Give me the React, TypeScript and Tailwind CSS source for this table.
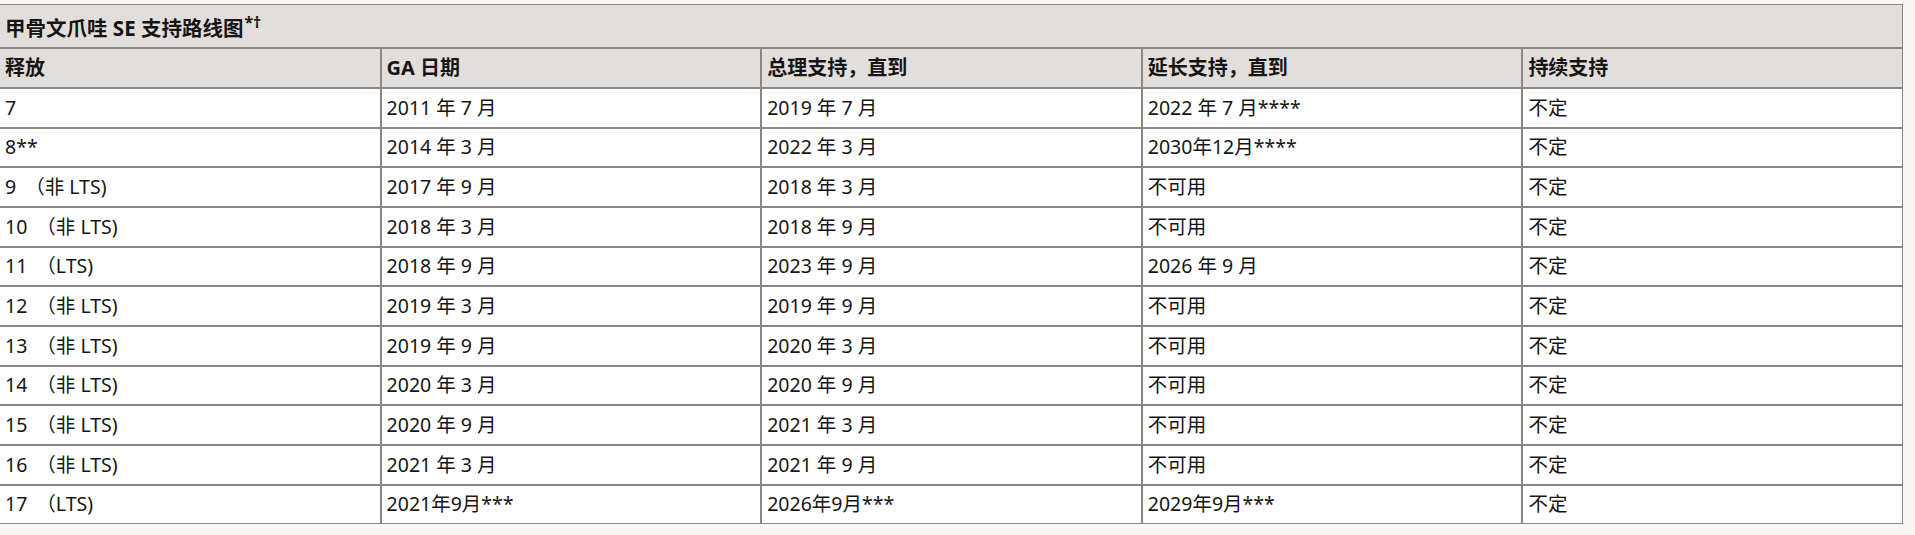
const rows: [string, string, string, string, string, string][] = [
  ['7', '', '2011 年 7 月', '2019 年 7 月', '2022 年 7 月****', '不定'],
  ['8**', '', '2014 年 3 月', '2022 年 3 月', '2030年12月****', '不定'],
  ['9', '非 LTS', '2017 年 9 月', '2018 年 3 月', '不可用', '不定'],
  ['10', '非 LTS', '2018 年 3 月', '2018 年 9 月', '不可用', '不定'],
  ['11', 'LTS', '2018 年 9 月', '2023 年 9 月', '2026 年 9 月', '不定'],
  ['12', '非 LTS', '2019 年 3 月', '2019 年 9 月', '不可用', '不定'],
  ['13', '非 LTS', '2019 年 9 月', '2020 年 3 月', '不可用', '不定'],
  ['14', '非 LTS', '2020 年 3 月', '2020 年 9 月', '不可用', '不定'],
  ['15', '非 LTS', '2020 年 9 月', '2021 年 3 月', '不可用', '不定'],
  ['16', '非 LTS', '2021 年 3 月', '2021 年 9 月', '不可用', '不定'],
  ['17', 'LTS', '2021年9月***', '2026年9月***', '2029年9月***', '不定'],
];

const headers = ['释放', 'GA 日期', '总理支持，直到', '延长支持，直到', '持续支持'];

export default function App() {
  return (
    <div className="min-h-[535px] w-[1915px] bg-[#f8f7f6] pt-[4px] text-[#161513] font-['Noto_Sans','Noto_Sans_CJK_SC',sans-serif]">
      <table className="w-[1903px] table-fixed border-separate border-spacing-0 text-[19.5px] leading-[24px]">
        <thead>
          <tr className="h-[44px] bg-[#e1dedb]">
            <th
              colSpan={5}
              className="border border-l-0 border-[#8b8682] px-[5px] pt-[4px] text-left align-middle text-[20.5px] font-bold"
            >
              甲骨文爪哇 SE 支持路线图<sup className="ml-[1px] text-[16px]">*†</sup>
            </th>
          </tr>
          <tr className="h-[40px] bg-[#e1dedb]">
            {headers.map((h, i) => (
              <th
                key={h}
                className={`border border-[#8b8682] px-[5px] text-left align-middle text-[20px] font-bold ${i === 0 ? 'border-l-0' : ''}`}
              >
                {h}
              </th>
            ))}
          </tr>
        </thead>
        <tbody className="bg-white">
          {rows.map(([num, tag, ...rest]) => (
            <tr key={num} className="h-[39.66px]">
              <td className="border border-l-0 border-[#8b8682] px-[5px] align-middle">
                {num}
                {tag && <span className="ml-[9px]">（{tag})</span>}
              </td>
              {rest.map((c, i) => (
                <td key={i} className="border border-[#8b8682] px-[5px] align-middle">
                  {c}
                </td>
              ))}
            </tr>
          ))}
        </tbody>
      </table>
    </div>
  );
}
